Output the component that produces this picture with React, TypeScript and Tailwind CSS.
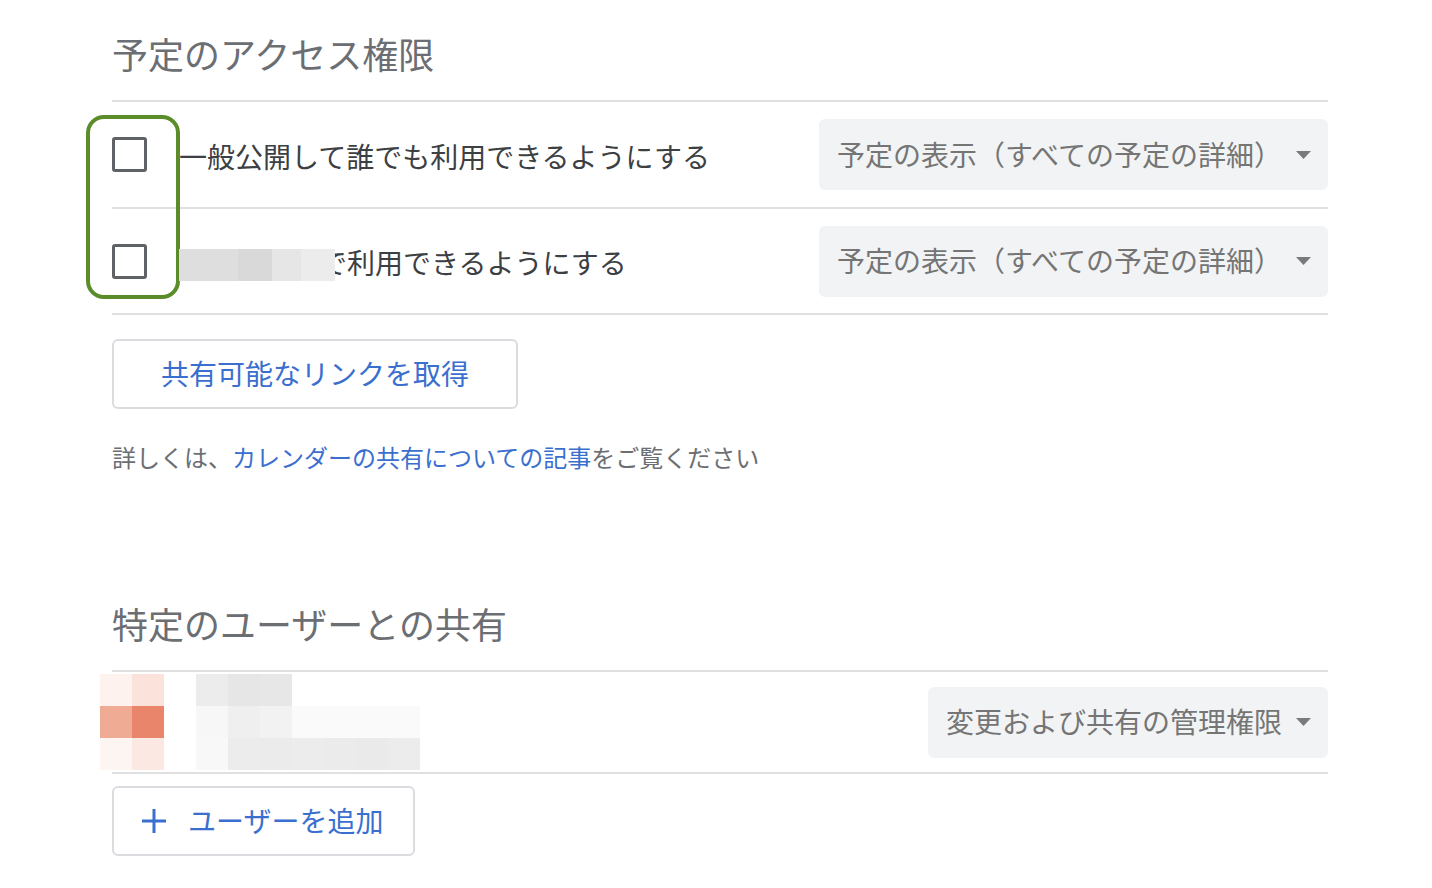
import React from 'react';

const font = { fontFamily: '"Noto Sans CJK JP", "Noto Sans", sans-serif' };

function Caret() {
  return (
    <svg width="15" height="8" viewBox="0 0 15 8" className="shrink-0">
      <polygon points="0,0 15,0 7.5,8" fill="#7a7a7a" />
    </svg>
  );
}

function Select({ label, width }: { label: string; width: string }) {
  return (
    <div
      className={`${width} h-[71px] shrink-0 rounded-[6px] bg-[#f1f3f4] flex items-center justify-between pl-[18px] pr-[17px] text-[28px] text-[#757575]`}
    >
      <span className="whitespace-nowrap mt-[-2px]">{label}</span>
      <Caret />
    </div>
  );
}

function Checkbox() {
  return <div className="w-[35px] h-[35px] shrink-0 border-[3px] border-[#5f6368] rounded-[3px]" />;
}

function Divider() {
  return <div className="h-[2px] bg-[#e0e0e0]" />;
}

// pixelated blur blocks used to mask personal info
const nameRows = [
  ['#ececec', '#e6e6e6', '#e7e7e7', '#ffffff', '#ffffff', '#ffffff', '#ffffff'],
  ['#f7f7f7', '#efefef', '#f2f2f2', '#fafafa', '#fafafa', '#fafafa', '#fafafa'],
  ['#f8f8f8', '#ececec', '#ebebeb', '#ececec', '#ebebeb', '#eaeaea', '#ececec'],
];

const avatarRows = [
  ['#fdf2ee', '#fbe2da'],
  ['#efab93', '#e8856a'],
  ['#fdf5f2', '#fbe8e2'],
];

export default function App() {
  return (
    <div className="min-h-screen bg-white" style={font}>
      <div className="ml-[112px] w-[1216px] pt-[31px]">
        {/* Access permissions */}
        <h2 className="text-[36px] leading-[44px] text-[#6b6e72] font-normal">予定のアクセス権限</h2>
        <div className="mt-[25px]">
          <Divider />
          <div className="relative">
            {/* annotation frame */}
            <div className="absolute left-[-26px] top-[13px] w-[94px] h-[184px] border-[4px] border-[#5b8c2a] rounded-[18px]" />

            <div className="h-[105px] flex items-center">
              <Checkbox />
              <span className="ml-[32px] mt-[2px] text-[28px] text-[#3c4043] whitespace-nowrap">
                一般公開して誰でも利用できるようにする
              </span>
              <div className="flex-1" />
              <Select label="予定の表示（すべての予定の詳細）" width="w-[509px]" />
            </div>
            <Divider />
            <div className="h-[104px] flex items-center">
              <Checkbox />
              <span className="ml-[32px] mt-[8px] flex items-center whitespace-nowrap">
                <span className="relative z-10 flex h-[32px]">
                  <span className="w-[59px] bg-[#dedede]" />
                  <span className="w-[34px] bg-[#d9d9d9]" />
                  <span className="w-[29px] bg-[#e6e6e6]" />
                  <span className="w-[34px] bg-[#ececec]" />
                </span>
                <span className="ml-[-16px] text-[28px] text-[#3c4043] mt-[-6px]">で利用できるようにする</span>
              </span>
              <div className="flex-1" />
              <Select label="予定の表示（すべての予定の詳細）" width="w-[509px]" />
            </div>
            <Divider />
          </div>
        </div>

        <button className="mt-[24px] w-[406px] h-[70px] border-2 border-[#dadce0] rounded-[6px] text-[28px] text-[#3b6fcf] flex items-center justify-center">
          <span className="mt-[-2px]">共有可能なリンクを取得</span>
        </button>

        <p className="mt-[32px] text-[24px] leading-[32px] text-[#6b6e72]">
          詳しくは、<span className="text-[#3b6fcf]">カレンダーの共有についての記事</span>をご覧ください
        </p>

        {/* Specific users */}
        <h2 className="mt-[128px] text-[36px] leading-[44px] text-[#6b6e72] font-normal">特定のユーザーとの共有</h2>
        <div className="mt-[25px]">
          <Divider />
          <div className="h-[100px] flex items-center">
            <div className="ml-[-12px] flex flex-col">
              {avatarRows.map((row, i) => (
                <div key={i} className="flex">
                  {row.map((c, j) => (
                    <div key={j} className="w-[32px] h-[32px]" style={{ backgroundColor: c }} />
                  ))}
                </div>
              ))}
            </div>
            <div className="ml-[32px] flex flex-col">
              {nameRows.map((row, i) => (
                <div key={i} className="flex">
                  {row.map((c, j) => (
                    <div key={j} className="w-[32px] h-[32px]" style={{ backgroundColor: c }} />
                  ))}
                </div>
              ))}
            </div>
            <div className="flex-1" />
            <Select label="変更および共有の管理権限" width="w-[400px]" />
          </div>
          <Divider />
        </div>

        <button className="mt-[12px] w-[303px] h-[70px] border-2 border-[#dadce0] rounded-[6px] text-[28px] text-[#3b6fcf] flex items-center pl-[27px]">
          <svg width="26" height="26" viewBox="0 0 26 26" className="shrink-0">
            <path d="M13 1v24M1 13h24" stroke="#3b6fcf" strokeWidth="3" />
          </svg>
          <span className="ml-[21px] mt-[-2px]">ユーザーを追加</span>
        </button>
      </div>
    </div>
  );
}
